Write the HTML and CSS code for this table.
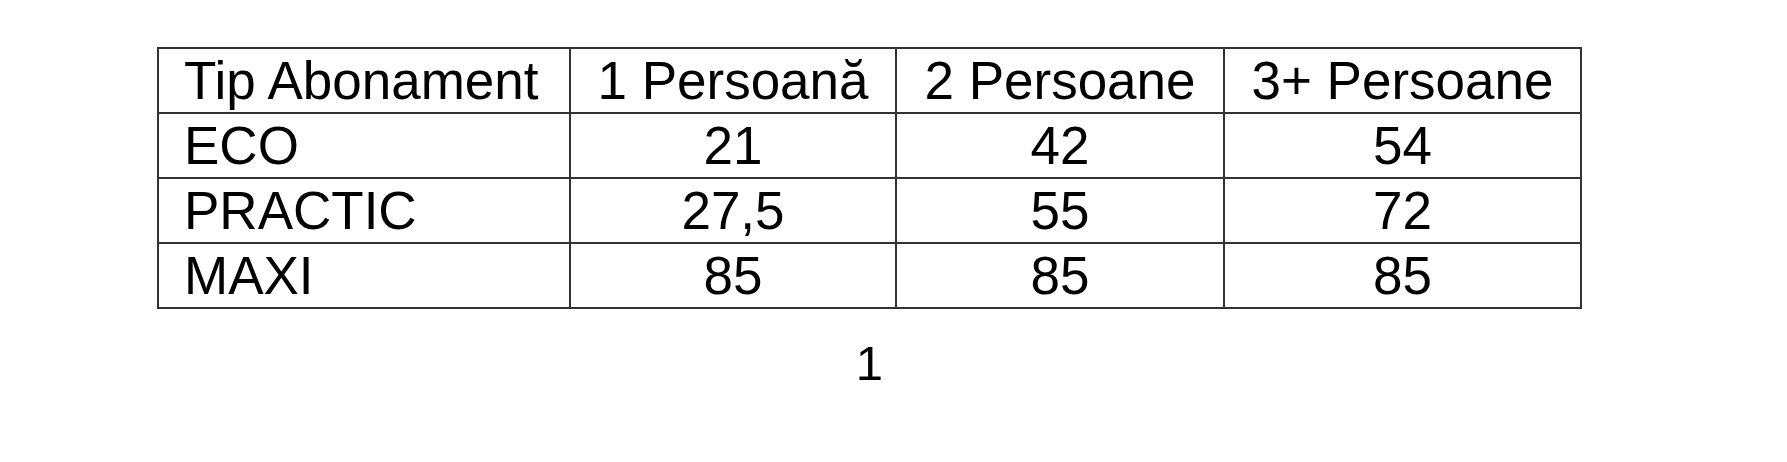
FILE: index.html
```html
<!DOCTYPE html>
<html lang="ro">
<head>
<meta charset="utf-8">
<title>Abonamente</title>
<link rel="stylesheet" href="styles.css">
</head>
<body>
<div class="page">
  <table class="prices">
    <colgroup>
      <col class="c1"><col class="c2"><col class="c3"><col class="c4">
    </colgroup>
    <tr><td class="name">Tip Abonament</td><td>1 Persoană</td><td>2 Persoane</td><td>3+ Persoane</td></tr>
    <tr><td class="name">ECO</td><td>21</td><td>42</td><td>54</td></tr>
    <tr><td class="name">PRACTIC</td><td>27,5</td><td>55</td><td>72</td></tr>
    <tr><td class="name">MAXI</td><td>85</td><td>85</td><td>85</td></tr>
  </table>
  <div class="pagenum">1</div>
</div>
</body>
</html>
```
FILE: styles.css
```css
html, body {
  margin: 0;
  padding: 0;
  background: #ffffff;
}
.page {
  padding: 47px 0 0 157px;
  width: 1425px;
  font-family: "Liberation Sans", Arial, sans-serif;
  color: #000000;
}
.prices {
  border-collapse: collapse;
  table-layout: fixed;
  width: 1425px;
  font-size: 53px;
}
.c1 { width: 412px; }
.c2 { width: 326px; }
.c3 { width: 328px; }
.c4 { width: 357px; }
.prices td {
  border: 2px solid #333333;
  padding: 0 10px;
  height: 64.5px;
  line-height: 63px;
  text-align: center;
  white-space: nowrap;
  box-sizing: border-box;
}
.prices td.name {
  text-align: left;
  padding-left: 25px;
}
.pagenum {
  margin-top: 27px;
  text-align: center;
  font-size: 49px;
  line-height: 55px;
}
```
